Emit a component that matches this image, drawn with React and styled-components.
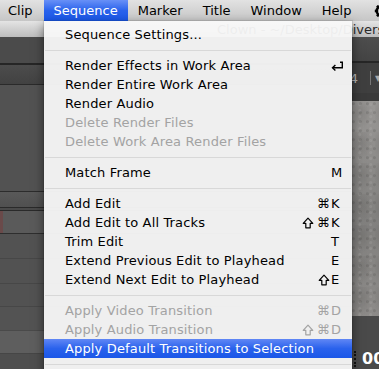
import React from "react";
import styled, { createGlobalStyle } from "styled-components";

const GlobalStyle = createGlobalStyle`
  html, body {
    margin: 0;
    padding: 0;
    background: #505050;
  }
  body {
    font-family: "DejaVu Sans", "Liberation Sans", sans-serif;
  }
`;

const barItems = ["Clip", "Sequence", "Marker", "Title", "Window", "Help"];

const menuRows = [
  { label: "Sequence Settings..." },
  { sep: true },
  { label: "Render Effects in Work Area", key: "return" },
  { label: "Render Entire Work Area" },
  { label: "Render Audio" },
  { label: "Delete Render Files", disabled: true },
  { label: "Delete Work Area Render Files", disabled: true },
  { sep: true },
  { label: "Match Frame", key: "M" },
  { sep: true },
  { label: "Add Edit", cmd: true, key: "K" },
  { label: "Add Edit to All Tracks", shift: true, cmd: true, key: "K" },
  { label: "Trim Edit", key: "T" },
  { label: "Extend Previous Edit to Playhead", key: "E" },
  { label: "Extend Next Edit to Playhead", shift: true, key: "E" },
  { sep: true },
  { label: "Apply Video Transition", cmd: true, key: "D", disabled: true },
  { label: "Apply Audio Transition", shift: true, cmd: true, key: "D", disabled: true },
  { label: "Apply Default Transitions to Selection", active: true },
  { sep: true },
];

// stripes of the browser panel on the left, top to bottom
const panelStripes = [
  { h: 26, bg: "#4b4b4b", line: "#262626", lh: 2 },
  { h: 19, bg: "linear-gradient(#4c4c4c, #424242)", line: "#2a2a2a", lh: 1 },
  { h: 106, bg: "#525252", line: "#2c2c2c", lh: 1 },
  { h: 15, bg: "linear-gradient(#595959, #505050)", line: "#2a2a2a", lh: 1 },
  { h: 2, bg: "#4a4a4a", line: "#2a2a2a", lh: 1 },
  { h: 22, bg: "#5a5a5a", line: "#2e2e2e", lh: 1, tint: true },
  { h: 24, bg: "#525252", line: "#474747", lh: 1 },
  { h: 24, bg: "#525252", line: "#474747", lh: 1 },
  { h: 22, bg: "#525252", line: "#474747", lh: 1 },
  { h: 23, bg: "#535353", line: "#4a4a4a", lh: 1 },
  { h: 22, bg: "#5e5e5e", line: "#464646", lh: 1 },
  { h: 20, bg: "#4e4e4e", line: "transparent", lh: 0 },
];

function ShiftGlyph() {
  return (
    <svg width="12" height="12" viewBox="0 0 12 12">
      <path d="M6 1.2L10.8 6.3H8.2V10.8H3.8V6.3H1.2Z" fill="none" strokeWidth="1.2" strokeLinejoin="round" />
    </svg>
  );
}

function ReturnGlyph() {
  return (
    <svg width="13" height="10" viewBox="0 0 13 10">
      <path d="M9 1.2H11.3V6.7H1.8" fill="none" strokeWidth="1.4" />
      <path d="M4.4 3.9L1.5 6.7L4.4 9.5" fill="none" strokeWidth="1.4" />
    </svg>
  );
}

export default function App() {
  return (
    <>
      <GlobalStyle />
      <Screen>
        <MenuBar>
          {barItems.map((item) => (
            <BarItem key={item} $active={item === "Sequence"}>
              {item}
            </BarItem>
          ))}
          <StatusIcon>
            <svg width="16" height="16" viewBox="0 0 16 16">
              <circle cx="8" cy="8" r="5.2" fill="none" stroke="#000" strokeWidth="2.6" />
              <path d="M8 0.8v3M8 12.2v3M0.8 8h3M12.2 8h3M2.9 2.9l2.1 2.1M11 11l2.1 2.1M2.9 13.1l2.1-2.1M11 5l2.1-2.1" stroke="#000" strokeWidth="2.4" />
            </svg>
          </StatusIcon>
        </MenuBar>

        <TitleBar>
          <TitleText>Clown - ~/Desktop/Divers</TitleText>
        </TitleBar>

        <Workspace>
          <BrowserPanel>
            {panelStripes.map((s, i) => (
              <Stripe key={i} $h={s.h} $bg={s.bg} $line={s.line} $lh={s.lh} $tint={s.tint} />
            ))}
          </BrowserPanel>

          <Viewer>
            <ViewerHead />
            <TimecodeStrip>
              <SmallTimecode>00:00:00:04</SmallTimecode>
              <StripDivider />
              <DropArrow>▼</DropArrow>
            </TimecodeStrip>
            <ViewerGap />
            <Picture />
            <ViewerFoot>
              <Grip />
              <BigTimecode>00:00:00:00</BigTimecode>
            </ViewerFoot>
          </Viewer>
        </Workspace>

        <Dropdown>
          {menuRows.map((row, i) =>
            row.sep ? (
              <Separator key={i} />
            ) : (
              <Row key={i} $disabled={row.disabled} $active={row.active}>
                <RowLabel>{row.label}</RowLabel>
                {row.key && (
                  <Shortcut>
                    <Mods>
                      {row.shift && <ShiftGlyph />}
                      {row.cmd && <span>⌘</span>}
                    </Mods>
                    <KeyChar>{row.key === "return" ? <ReturnGlyph /> : row.key}</KeyChar>
                  </Shortcut>
                )}
              </Row>
            )
          )}
        </Dropdown>
      </Screen>
    </>
  );
}

const Screen = styled.div`
  position: relative;
  width: 379px;
  height: 369px;
  overflow: hidden;
  display: flex;
  flex-direction: column;
  background: #505050;
  font-family: "DejaVu Sans", "Liberation Sans", sans-serif;
  font-size: 13px;
`;

const MenuBar = styled.div`
  display: flex;
  align-items: stretch;
  height: 21px;
  flex-shrink: 0;
  background: linear-gradient(#e2e2e2, #c6c6c6);
`;

const BarItem = styled.div`
  padding: 0 10px;
  line-height: 21px;
  white-space: nowrap;
  color: ${(p) => (p.$active ? "#fff" : "#000")};
  background: ${(p) => (p.$active ? "linear-gradient(#6890f7, #2a63ec 50%, #1a57e8)" : "transparent")};
  &:first-child {
    padding-left: 8px;
    padding-right: 11px;
  }
`;

const StatusIcon = styled.div`
  display: flex;
  align-items: center;
  flex-shrink: 0;
  margin-left: 13px;
`;

const TitleBar = styled.div`
  height: 16px;
  flex-shrink: 0;
  display: flex;
  align-items: center;
  padding-left: 217px;
  background: linear-gradient(#e4e4e4, #bdbdbd);
  overflow: hidden;
`;

const TitleText = styled.div`
  color: #2a2a2a;
  white-space: nowrap;
  font-size: 13px;
`;

const Workspace = styled.div`
  flex: 1;
  display: flex;
  min-height: 0;
`;

const BrowserPanel = styled.div`
  flex: 0 0 352px;
  display: flex;
  flex-direction: column;
`;

const Stripe = styled.div`
  flex-shrink: 0;
  height: ${(p) => p.$h}px;
  background: ${(p) => p.$bg};
  border-bottom: ${(p) => p.$lh}px solid ${(p) => p.$line};
  ${(p) => p.$tint && "box-shadow: inset 3px 0 0 #6a4a4a;"}
`;

const Viewer = styled.div`
  flex: 1;
  display: flex;
  flex-direction: column;
  overflow: hidden;
  background: #4a4a4a;
`;

const ViewerHead = styled.div`
  height: 24px;
  flex-shrink: 0;
  background: linear-gradient(#4e4e4e, #444);
  border-bottom: 2px solid #262626;
`;

const TimecodeStrip = styled.div`
  height: 30px;
  flex-shrink: 0;
  display: flex;
  align-items: center;
  justify-content: flex-end;
  margin-right: -2px;
  background: #3f3f3f;
`;

const SmallTimecode = styled.div`
  flex-shrink: 0;
  white-space: nowrap;
  color: #b4b4b4;
  font-size: 13px;
  margin-right: 12px;
`;

const StripDivider = styled.div`
  flex-shrink: 0;
  width: 1px;
  height: 14px;
  background: #777;
  margin-right: 4px;
`;

const DropArrow = styled.div`
  flex-shrink: 0;
  width: 6px;
  color: #aaa;
  font-size: 8px;
`;

const ViewerGap = styled.div`
  height: 8px;
  flex-shrink: 0;
  background: #3a3a3a;
`;

const Picture = styled.div`
  height: 215px;
  flex-shrink: 0;
  background-color: #8b8987;
  background-image:
    radial-gradient(circle at 20% 30%, rgba(60, 58, 56, 0.18) 0 1px, transparent 2px),
    radial-gradient(circle at 70% 60%, rgba(200, 198, 196, 0.16) 0 1px, transparent 2px),
    radial-gradient(ellipse at 40% 35%, rgba(70, 68, 66, 0.2), transparent 60%),
    linear-gradient(170deg, #9a9896, #81807e 55%, #8d8b89);
  background-size: 7px 9px, 11px 6px, 23px 31px, 100% 100%;
`;

const ViewerFoot = styled.div`
  flex: 1;
  display: flex;
  align-items: flex-end;
  gap: 4px;
  padding: 0 0 1px 2px;
  background: #4a4a4a;
`;

const Grip = styled.div`
  flex-shrink: 0;
  width: 2px;
  height: 16px;
  border-left: 2px dotted #111;
  margin-bottom: 1px;
`;

const BigTimecode = styled.div`
  flex-shrink: 0;
  white-space: nowrap;
  color: #fff;
  font-weight: bold;
  font-size: 16px;
  line-height: 18px;
`;

const Dropdown = styled.div`
  position: absolute;
  left: 44px;
  top: 21px;
  width: 308px;
  padding: 4px 0;
  letter-spacing: 0.15px;
  background: rgba(248, 248, 248, 0.95);
  box-shadow: 0 4px 10px rgba(0, 0, 0, 0.5), 0 0 0 1px rgba(0, 0, 0, 0.08);
`;

const Row = styled.div`
  display: flex;
  align-items: center;
  height: 19px;
  padding: 0 8px 0 21px;
  white-space: nowrap;
  color: ${(p) => (p.$active ? "#fff" : p.$disabled ? "#a3a3a3" : "#000")};
  background: ${(p) => (p.$active ? "linear-gradient(#6087f5, #2a62ec 50%, #1b57e8)" : "transparent")};
  svg path {
    stroke: ${(p) => (p.$disabled ? "#a3a3a3" : "#000")};
  }
`;

const RowLabel = styled.span`
  flex: 1;
`;

const Shortcut = styled.span`
  display: flex;
  align-items: center;
`;

const Mods = styled.span`
  display: flex;
  align-items: center;
  gap: 3px;
  margin-right: 1px;
`;

const KeyChar = styled.span`
  width: 13px;
  display: flex;
  align-items: center;
`;

const Separator = styled.div`
  height: 12px;
  display: flex;
  align-items: center;
  &::after {
    content: "";
    flex: 1;
    height: 1px;
    margin: 0 1px;
    background: #d8d8d8;
  }
`;
